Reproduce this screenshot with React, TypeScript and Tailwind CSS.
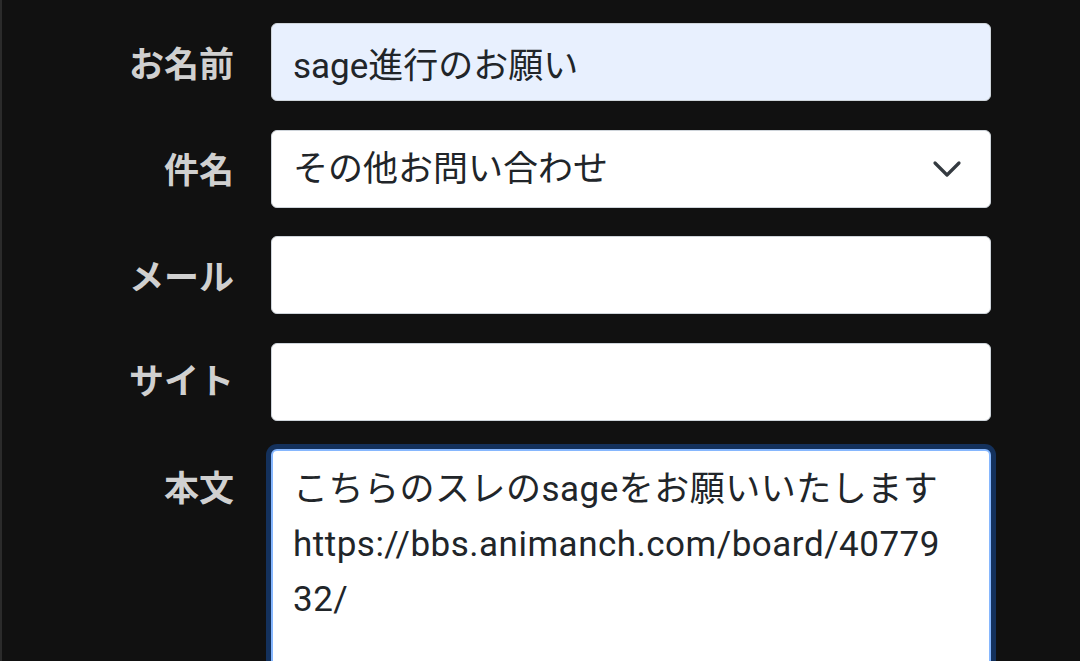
const FONT = "font-['Roboto','Noto_Sans_CJK_JP',sans-serif]";

function Label({ children }: { children: React.ReactNode }) {
  return (
    <div className="w-[232px] shrink-0 text-right text-[35px] font-bold leading-none text-[#d0d0d0]">
      {children}
    </div>
  );
}

export default function App() {
  const inputCls =
    "w-[720px] h-[78px] rounded-[6px] border border-[#ced4da] px-[21px] text-[35px] text-[#212529] outline-none";

  return (
    <div className={`h-[661px] overflow-hidden bg-[#111111] border-l-2 border-[#2b2b2b] ${FONT}`}>
      <div className="flex flex-col gap-[28.5px] pt-[23px]">
        <div className="flex items-center gap-[37px]">
          <div className="pt-[6px]">
            <Label>お名前</Label>
          </div>
          <input className={`${inputCls} bg-[#e8f0fe]`} defaultValue="sage進行のお願い" />
        </div>

        <div className="flex items-center gap-[37px]">
          <div className="pt-[6px]">
            <Label>件名</Label>
          </div>
          <div className={`${inputCls} bg-white flex items-center justify-between pr-[28px]`}>
            <span className="pt-[4px]">その他お問い合わせ</span>
            <svg width="30" height="18" viewBox="0 0 30 18" fill="none">
              <path d="M3 3l12 12L27 3" stroke="#343a40" strokeWidth="3.2" strokeLinecap="round" strokeLinejoin="round" />
            </svg>
          </div>
        </div>

        <div className="flex items-center gap-[37px]">
          <div className="pt-[6px]">
            <Label>メール</Label>
          </div>
          <input className={`${inputCls} bg-white`} />
        </div>

        <div className="flex items-center gap-[37px]">
          <div className="pt-[2px]">
            <Label>サイト</Label>
          </div>
          <input className={`${inputCls} bg-white`} />
        </div>

        <div className="flex items-start gap-[37px]">
          <div className="pt-[23px]">
            <Label>本文</Label>
          </div>
          <textarea
            className="w-[720px] h-[300px] resize-none rounded-[6px] border-2 border-[#86b7fe] bg-white pl-[20px] pr-[39px] pt-[11px] text-[35px] leading-[55px] tracking-[0.5px] text-[#212529] outline-none shadow-[0_0_0_5px_#14315c] [overflow-wrap:anywhere]"
            defaultValue={"こちらのスレのsageをお願いいたします\nhttps://bbs.animanch.com/board/4077932/"}
          />
        </div>
      </div>
    </div>
  );
}
